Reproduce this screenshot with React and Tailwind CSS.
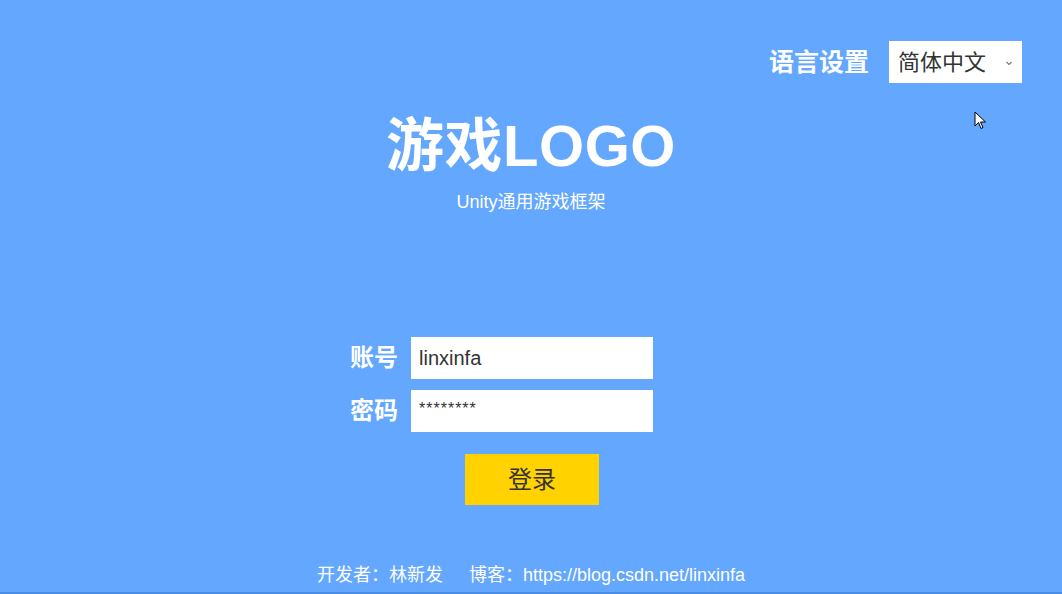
import React from "react";

const font = { fontFamily: '"Liberation Sans", "Noto Sans CJK SC", sans-serif' };

const Field = ({ label, value }) => (
  <div className="flex items-center">
    <span className="w-[64px] text-right pr-[13px] text-[24px] font-bold text-white leading-none">
      {label}
    </span>
    <div className="w-[242px] h-[42px] bg-white flex items-center pl-[8px] text-[20px] text-[#333]">
      {value}
    </div>
  </div>
);

export default function App() {
  return (
    <div
      className="relative w-[1062px] h-[594px] bg-[#63a7fe] flex flex-col overflow-hidden border-b-2 border-[#4a8de6]"
      style={font}
    >
      <div className="flex justify-end items-center pt-[41px] pr-[40px]">
        <span className="text-[25px] font-bold text-white mr-[20px] mt-[1px]">语言设置</span>
        <div className="w-[133px] h-[42px] bg-white flex items-center justify-between pl-[9px] pr-[8px]">
          <span className="text-[22px] text-[#333]">简体中文</span>
          <svg width="10" height="10" viewBox="0 0 10 10" className="mt-[2px]">
            <path d="M2.5 4 L5 6.5 L7.5 4" fill="none" stroke="#777" strokeWidth="1.1" />
          </svg>
        </div>
      </div>

      {/* mouse cursor */}
      <svg
        className="absolute left-[974px] top-[111px]"
        width="14"
        height="20"
        viewBox="0 0 14 20"
      >
        <path
          d="M1 1 L1 15 L4.5 11.5 L7 17.5 L9 16.5 L6.5 11 L11.5 11 Z"
          fill="#fff"
          stroke="#000"
          strokeWidth="1"
          strokeLinejoin="round"
        />
      </svg>

      <div className="flex flex-col items-center mt-[34px]">
        <h1 className="text-[58px] font-bold text-white leading-none tracking-[0.5px]">游戏LOGO</h1>
        <p className="text-[18px] text-white mt-[14px]">Unity通用游戏框架</p>
      </div>

      <div className="flex flex-col items-center mt-[121px]">
        <div className="flex flex-col gap-[11px] mr-[62px]">
          <Field label="账号" value="linxinfa" />
          <Field label="密码" value={<span className="text-[16px] tracking-[1px] -mt-[4px]">********</span>} />
        </div>
        <button className="mt-[22px] w-[134px] h-[51px] bg-[#ffd200] text-[24px] text-[#333] ml-[2px]">
          登录
        </button>
      </div>

      <div className="mt-auto mb-[3px] flex justify-center text-[18px] text-white ml-[0px]">
        <span>开发者：林新发</span>
        <span className="ml-[26px]">博客：https://blog.csdn.net/linxinfa</span>
      </div>
    </div>
  );
}
